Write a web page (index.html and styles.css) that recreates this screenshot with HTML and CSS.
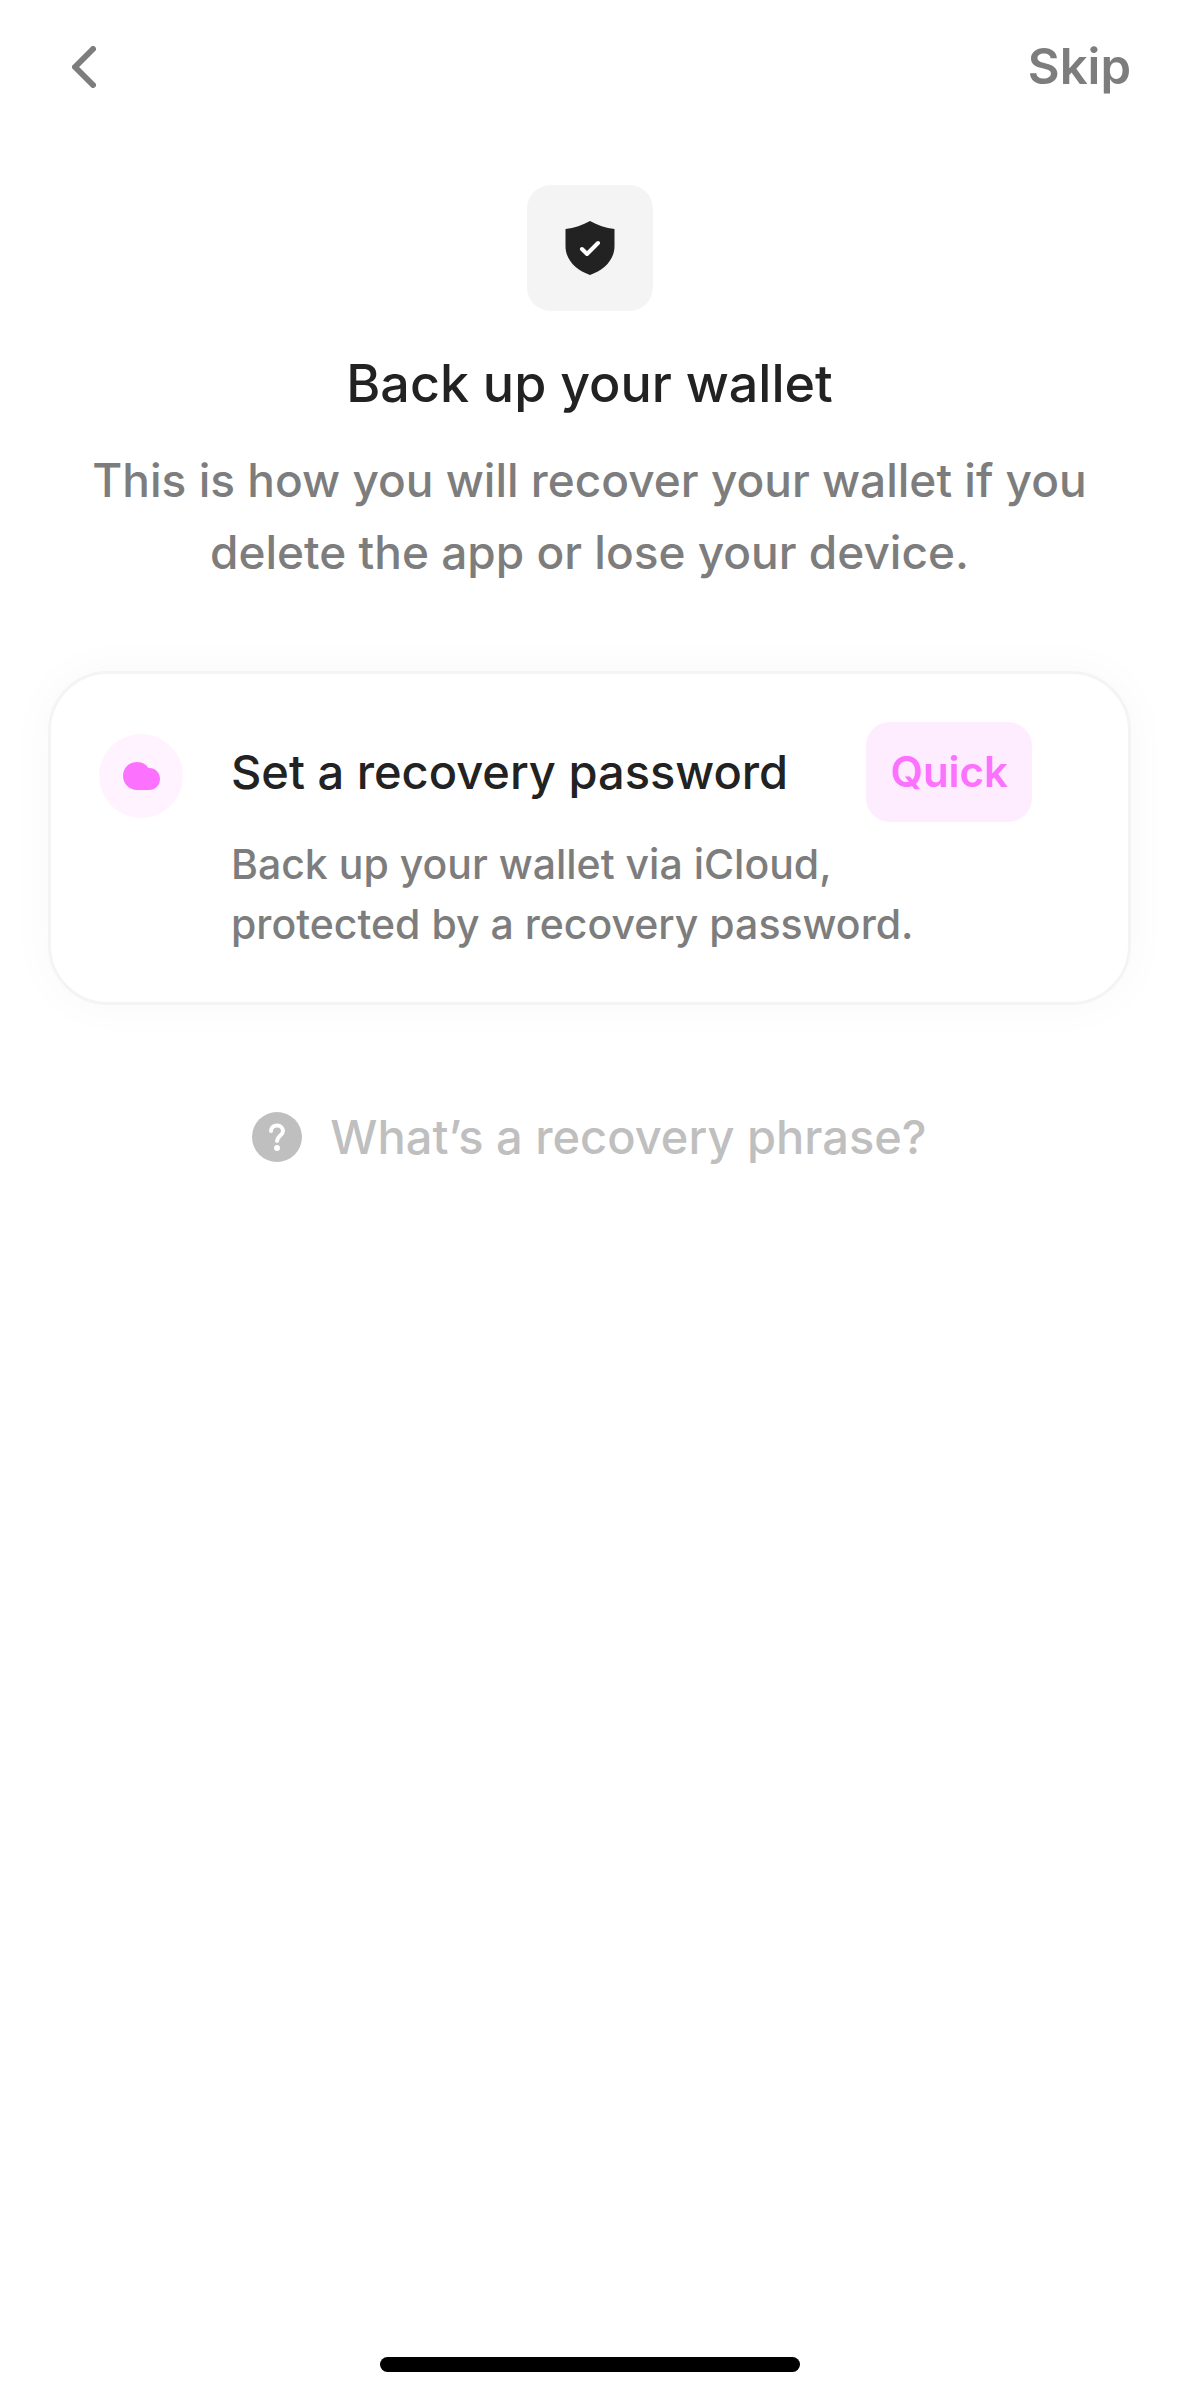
FILE: index.html
```html
<!DOCTYPE html>
<html lang="en">
	<head>
		<meta charset="UTF-8" />
		<meta name="viewport" content="width=device-width, initial-scale=1.0" />
		<title>Back up your wallet</title>
		<link rel="stylesheet" href="styles.css">
	</head>
	<body>
		<header class="topbar">
			<button class="back" type="button" aria-label="Back">
				<svg width="24" height="42" viewBox="0 0 24 42">
					<path d="M21 3L3 21L21 39" />
				</svg>
			</button>
			<button class="skip" type="button">Skip</button>
		</header>

		<main class="content">
			<div class="shield">
				<svg width="50" height="54" viewBox="0 0 50 54">
					<path fill="#222" d="M25 0C32 4 41 7 49.500 8V25C49.500 39 39 49 25 54C11 49 .5 39 .5 25V8C9 7 18 4 25 0Z" />
					<path class="check" d="M17 28L22 33L33 22" />
				</svg>
			</div>
			<h1>Back up your wallet</h1>
			<p class="intro">This is how you will recover your wallet if you delete the app or lose your device.</p>

			<button class="card" type="button">
				<span class="cloud">
					<svg width="37" height="28" viewBox="0 0 37 28">
						<path d="M14 0C20 0 23.500 3 25.500 6C32 5.500 37 10.500 37 17C37 23.500 32 28 26 28H14C6 28 0 21.500 0 14C0 6 6 0 14 0Z" />
					</svg>
				</span>
				<span class="card-text">
					<span class="card-head">
						<span class="card-title">Set a recovery password</span>
						<span class="badge">Quick</span>
					</span>
					<span class="card-desc">Back up your wallet via iCloud, protected by a recovery password.</span>
				</span>
			</button>

			<a class="help" href="#">
				<svg width="50" height="50" viewBox="0 0 50 50">
					<circle cx="25" cy="25" r="25" fill="#bfbfbf" />
					<path d="M19 19C19 15.500 21.500 13.500 25 13.500C28.500 13.500 31 16 31 19C31 23.500 25.500 23.500 25 29" />
					<circle cx="25" cy="36" r="3" fill="#fff" />
				</svg>
				What’s a recovery phrase?
			</a>
		</main>

		<div class="home-bar"></div>
	</body>
</html>
```

FILE: styles.css
```css
* {
	box-sizing: border-box;
}
body {
	margin: 0;
	min-height: 100vh;
	display: flex;
	flex-direction: column;
	background-color: #fff;
	color: #222;
	font-family: Inter, "Liberation Sans", sans-serif;
	font-size: 47px;
	font-weight: 500;
	line-height: 72px;
}
button {
	padding: 0;
	border: none;
	background: none;
	color: inherit;
	font: inherit;
	cursor: pointer;
}
svg {
	display: block;
	flex-shrink: 0;
}
.topbar {
	display: flex;
	justify-content: space-between;
	align-items: center;
	padding: 31px 48px 0 72px;
}
.back path {
	fill: none;
	stroke: #7d7d7d;
	stroke-width: 6;
	stroke-linecap: round;
	stroke-linejoin: round;
}
.skip {
	color: #7d7d7d;
	font-size: 49px;
	font-weight: 600;
}
.content {
	flex: 1;
	display: flex;
	flex-direction: column;
	align-items: center;
	padding: 82px 48px 48px;
}
.shield {
	display: flex;
	justify-content: center;
	align-items: center;
	width: 126px;
	height: 126px;
	border-radius: 24px;
	background-color: #f4f4f4;
}
.check {
	fill: none;
	stroke: #fff;
	stroke-width: 4;
	stroke-linecap: round;
	stroke-linejoin: round;
}
h1 {
	margin: 37px 0 24px;
	font-size: 52px;
	font-weight: 500;
	line-height: 72px;
}
.intro {
	max-width: 1032px;
	margin: 0 0 83px;
	color: #7d7d7d;
	font-size: 46px;
	text-align: center;
}
.card {
	display: flex;
	align-items: flex-start;
	gap: 48px;
	width: 100%;
	padding: 48px 96px 48px 48px;
	border: 3px solid #f4f4f4;
	border-radius: 60px;
	background-color: #fff;
	box-shadow: 0 0 48px rgba(0, 0, 0, 0.03);
	text-align: left;
}
.cloud {
	display: flex;
	justify-content: center;
	align-items: center;
	flex-shrink: 0;
	width: 84px;
	height: 84px;
	margin-top: 12px;
	border-radius: 50%;
	background-color: #fff3ff;
}
.cloud path {
	fill: #fc72ff;
}
.card-text {
	flex: 1;
}
.card-head {
	display: flex;
	justify-content: space-between;
	align-items: center;
	margin-bottom: 12px;
}
.badge {
	padding: 20px 24px;
	border-radius: 24px;
	background-color: #feecff;
	color: #fc72ff;
	font-size: 42px;
	font-weight: 600;
	line-height: 60px;
}
.card-desc {
	display: block;
	max-width: 720px;
	color: #7d7d7d;
	font-size: 41px;
	line-height: 60px;
}
.help {
	display: flex;
	align-items: center;
	gap: 28px;
	margin-top: 96px;
	color: #bfbfbf;
	text-decoration: none;
}
.help path {
	fill: none;
	stroke: #fff;
	stroke-width: 4;
	stroke-linecap: round;
}
.home-bar {
	width: 420px;
	height: 15px;
	margin: 0 auto 24px;
	border-radius: 8px;
	background-color: #000;
}
```
